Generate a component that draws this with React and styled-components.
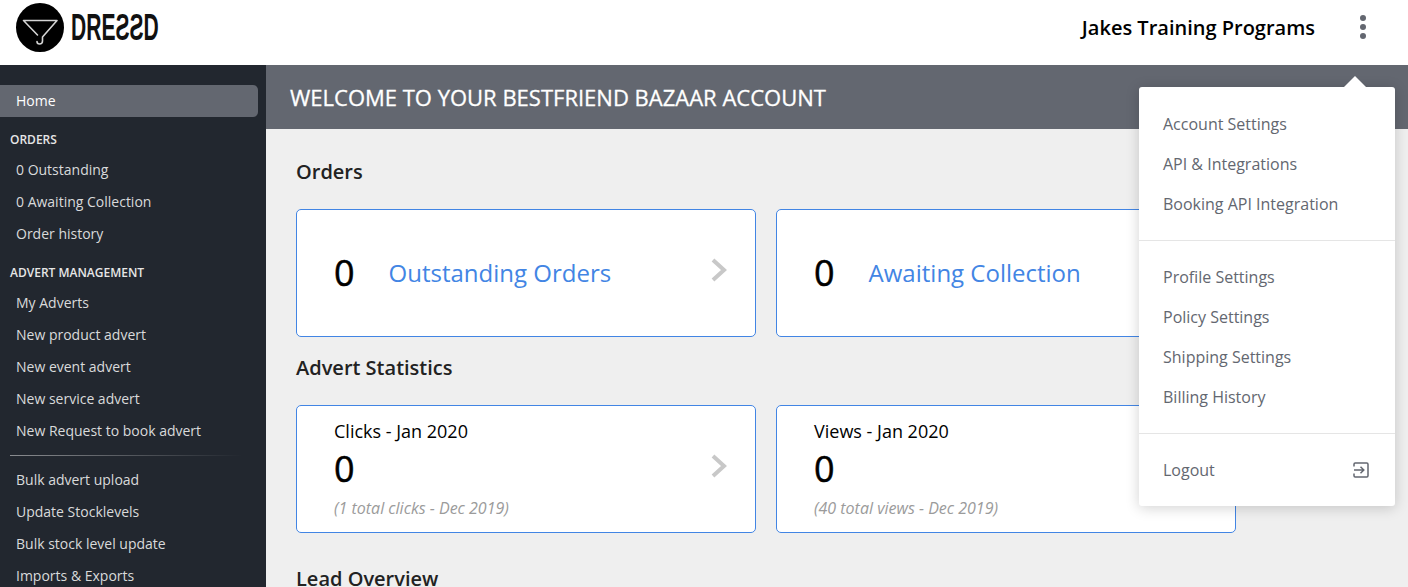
import React from "react";
import styled, { createGlobalStyle } from "styled-components";

const GlobalStyle = createGlobalStyle`
  html, body {
    margin: 0;
    height: 587px;
    overflow: hidden;
    background: #efefef;
    font-family: "Open Sans", sans-serif;
  }
  * { box-sizing: border-box; }
`;

const sections = [
  { title: "ORDERS", items: ["0 Outstanding", "0 Awaiting Collection", "Order history"] },
  {
    title: "ADVERT MANAGEMENT",
    items: ["My Adverts", "New product advert", "New event advert", "New service advert", "New Request to book advert"],
  },
];

const bulkItems = ["Bulk advert upload", "Update Stocklevels", "Bulk stock level update", "Imports & Exports"];

const menuGroups = [
  ["Account Settings", "API & Integrations", "Booking API Integration"],
  ["Profile Settings", "Policy Settings", "Shipping Settings", "Billing History"],
];

function Logo() {
  return (
    <LogoWrap>
      <svg width="48" height="49" viewBox="0 0 48 49">
        <ellipse cx="24" cy="24.5" rx="24" ry="24.5" fill="#000" />
        <path
          d="M7.5 17.5 H41 L26.5 34 M7.5 17.5 L21.5 32 M26.5 34 V38 Q26.5 41 23.5 41 Q21 41 21 38.5"
          fill="none"
          stroke="#d4d4d4"
          strokeWidth="1.6"
          strokeLinejoin="round"
          strokeLinecap="round"
        />
      </svg>
      <LogoText>DREƧƧD</LogoText>
    </LogoWrap>
  );
}

function Chevron() {
  return (
    <ChevronIcon width="18" height="26" viewBox="0 0 18 26">
      <path d="M3 3 L14 13 L3 23" fill="none" stroke="#c8c8c8" strokeWidth="4" />
    </ChevronIcon>
  );
}

function App() {
  return (
    <>
      <GlobalStyle />
      <Header>
        <Logo />
        <HeaderRight>
          <AccountName>Jakes Training Programs</AccountName>
          <Kebab>
            <i />
            <i />
            <i />
          </Kebab>
        </HeaderRight>
      </Header>
      <Body>
        <Sidebar>
          <HomeItem>Home</HomeItem>
          {sections.map((s) => (
            <div key={s.title}>
              <SectionTitle>{s.title}</SectionTitle>
              {s.items.map((item) => (
                <NavItem key={item}>{item}</NavItem>
              ))}
            </div>
          ))}
          <NavDivider />
          {bulkItems.map((item) => (
            <NavItem key={item}>{item}</NavItem>
          ))}
        </Sidebar>
        <Main>
          <Banner>WELCOME TO YOUR BESTFRIEND BAZAAR ACCOUNT</Banner>
          <Content>
            <SectionHeading>Orders</SectionHeading>
            <CardRow>
              <OrderCard>
                <BigNumber>0</BigNumber>
                <CardLink>Outstanding Orders</CardLink>
                <Chevron />
              </OrderCard>
              <OrderCard>
                <BigNumber>0</BigNumber>
                <CardLink>Awaiting Collection</CardLink>
              </OrderCard>
            </CardRow>
            <SectionHeading $tight>Advert Statistics</SectionHeading>
            <CardRow>
              <StatCard>
                <StatLabel>Clicks - Jan 2020</StatLabel>
                <StatNumber>0</StatNumber>
                <StatNote>(1 total clicks - Dec 2019)</StatNote>
                <Chevron />
              </StatCard>
              <StatCard>
                <StatLabel>Views - Jan 2020</StatLabel>
                <StatNumber>0</StatNumber>
                <StatNote>(40 total views - Dec 2019)</StatNote>
              </StatCard>
            </CardRow>
            <SectionHeading $last>Lead Overview</SectionHeading>
          </Content>
        </Main>
      </Body>
      <Dropdown>
        {menuGroups.map((group, i) => (
          <MenuGroup key={group[0]} $second={i === 1}>
            {group.map((item) => (
              <MenuItem key={item}>{item}</MenuItem>
            ))}
          </MenuGroup>
        ))}
        <LogoutRow>
          <MenuItem>Logout</MenuItem>
          <svg width="16" height="16" viewBox="0 0 16 16" fill="none" stroke="#636770" strokeWidth="1.5">
            <path d="M1 4.5 V2.2 Q1 1 2.2 1 H13.8 Q15 1 15 2.2 V13.8 Q15 15 13.8 15 H2.2 Q1 15 1 13.8 V11.5" />
            <path d="M1 8 H10.5 M7.5 4.8 L10.8 8 L7.5 11.2" />
          </svg>
        </LogoutRow>
      </Dropdown>
    </>
  );
}

const Header = styled.header`
  height: 65px;
  background: #fff;
  display: flex;
  align-items: center;
  justify-content: space-between;
  padding: 0 41px 0 16px;
`;

const LogoWrap = styled.div`
  display: flex;
  align-items: center;
  gap: 7px;
  margin-top: -10px;
`;

const LogoText = styled.span`
  font: 700 36px "Liberation Sans", sans-serif;
  color: #111;
  display: inline-block;
  width: 87px;
  white-space: nowrap;
  transform: scaleX(0.585);
  transform-origin: left center;
`;

const HeaderRight = styled.div`
  display: flex;
  align-items: center;
  gap: 45px;
  margin-top: -10px;
`;

const AccountName = styled.div`
  font-size: 20px;
  font-weight: 600;
  color: #000;
`;

const Kebab = styled.div`
  display: flex;
  flex-direction: column;
  gap: 3px;
  width: 7px;
  margin-top: -2px;
  i {
    width: 6px;
    height: 6px;
    border-radius: 50%;
    background: #636770;
  }
`;

const Body = styled.div`
  display: flex;
  height: 522px;
`;

const Sidebar = styled.nav`
  width: 266px;
  flex-shrink: 0;
  background: #22272f;
  padding-top: 20px;
  overflow: hidden;
`;

const HomeItem = styled.div`
  width: 258px;
  height: 32px;
  background: #636770;
  border-radius: 0 5px 5px 0;
  color: #fff;
  font-size: 14px;
  line-height: 32px;
  padding-left: 16px;
`;

const SectionTitle = styled.div`
  color: #e6e6e6;
  font-size: 12px;
  font-weight: 600;
  line-height: 16px;
  padding: 15px 0 6px 10px;
`;

const NavItem = styled.div`
  color: #d9dadb;
  font-size: 14px;
  line-height: 32px;
  height: 32px;
  padding-left: 16px;
`;

const NavDivider = styled.div`
  height: 1px;
  width: 232px;
  margin: 8px 0 8px 10px;
  background: linear-gradient(to right, #8a8c90, #22272f);
`;

const Main = styled.main`
  flex: 1;
  min-width: 0;
`;

const Banner = styled.div`
  height: 64px;
  background: #636770;
  color: #fff;
  font-size: 22px;
  font-weight: 400;
  -webkit-text-stroke: 0.3px #fff;
  line-height: 64px;
  padding-left: 24px;
`;

const Content = styled.div`
  padding: 0 30px;
`;

const SectionHeading = styled.h2`
  margin: 0;
  color: #222;
  font-size: 20px;
  font-weight: 600;
  line-height: 27px;
  padding: ${(p) => (p.$last ? "32px 0 0" : p.$tight ? "17px 0 24px" : "29px 0 24px")};
`;

const CardRow = styled.div`
  display: flex;
  gap: 20px;
`;

const Card = styled.div`
  position: relative;
  width: 460px;
  height: 128px;
  background: #fff;
  border: 1px solid #4285e4;
  border-radius: 5px;
  padding-left: 37px;
`;

const OrderCard = styled(Card)`
  display: flex;
  align-items: center;
  gap: 34px;
`;

const StatCard = styled(Card)`
  padding-top: 13px;
`;

const BigNumber = styled.div`
  font-size: 36px;
  font-weight: 400;
  -webkit-text-stroke: 0.5px #000;
  color: #000;
  line-height: 44px;
`;

const CardLink = styled.div`
  font-size: 24px;
  color: #4285e4;
  margin-top: -2px;
`;

const ChevronIcon = styled.svg`
  position: absolute;
  right: 27px;
  top: 47px;
`;

const StatLabel = styled.div`
  font-size: 18px;
  color: #000;
  line-height: 24px;
`;

const StatNumber = styled(BigNumber)`
  margin-top: 4px;
`;

const StatNote = styled.div`
  font-size: 16px;
  font-style: italic;
  color: #9b9b9b;
  line-height: 22px;
  margin-top: 6px;
`;

const Dropdown = styled.div`
  position: absolute;
  left: 1139px;
  top: 87px;
  width: 256px;
  height: 419px;
  background: #fff;
  border-radius: 3px;
  box-shadow: 0 2px 14px rgba(0, 0, 0, 0.18);
  &::before {
    content: "";
    position: absolute;
    left: 205px;
    top: -11px;
    border-left: 11px solid transparent;
    border-right: 11px solid transparent;
    border-bottom: 11px solid #fff;
  }
`;

const MenuGroup = styled.div`
  padding: ${(p) => (p.$second ? "16px" : "17px")} 24px 16px;
  border-bottom: 1px solid #e5e5e5;
`;

const MenuItem = styled.div`
  color: #636770;
  font-size: 16px;
  line-height: 40px;
`;

const LogoutRow = styled.div`
  display: flex;
  align-items: center;
  justify-content: space-between;
  padding: 16px 26px 0 24px;
`;

export default App;
